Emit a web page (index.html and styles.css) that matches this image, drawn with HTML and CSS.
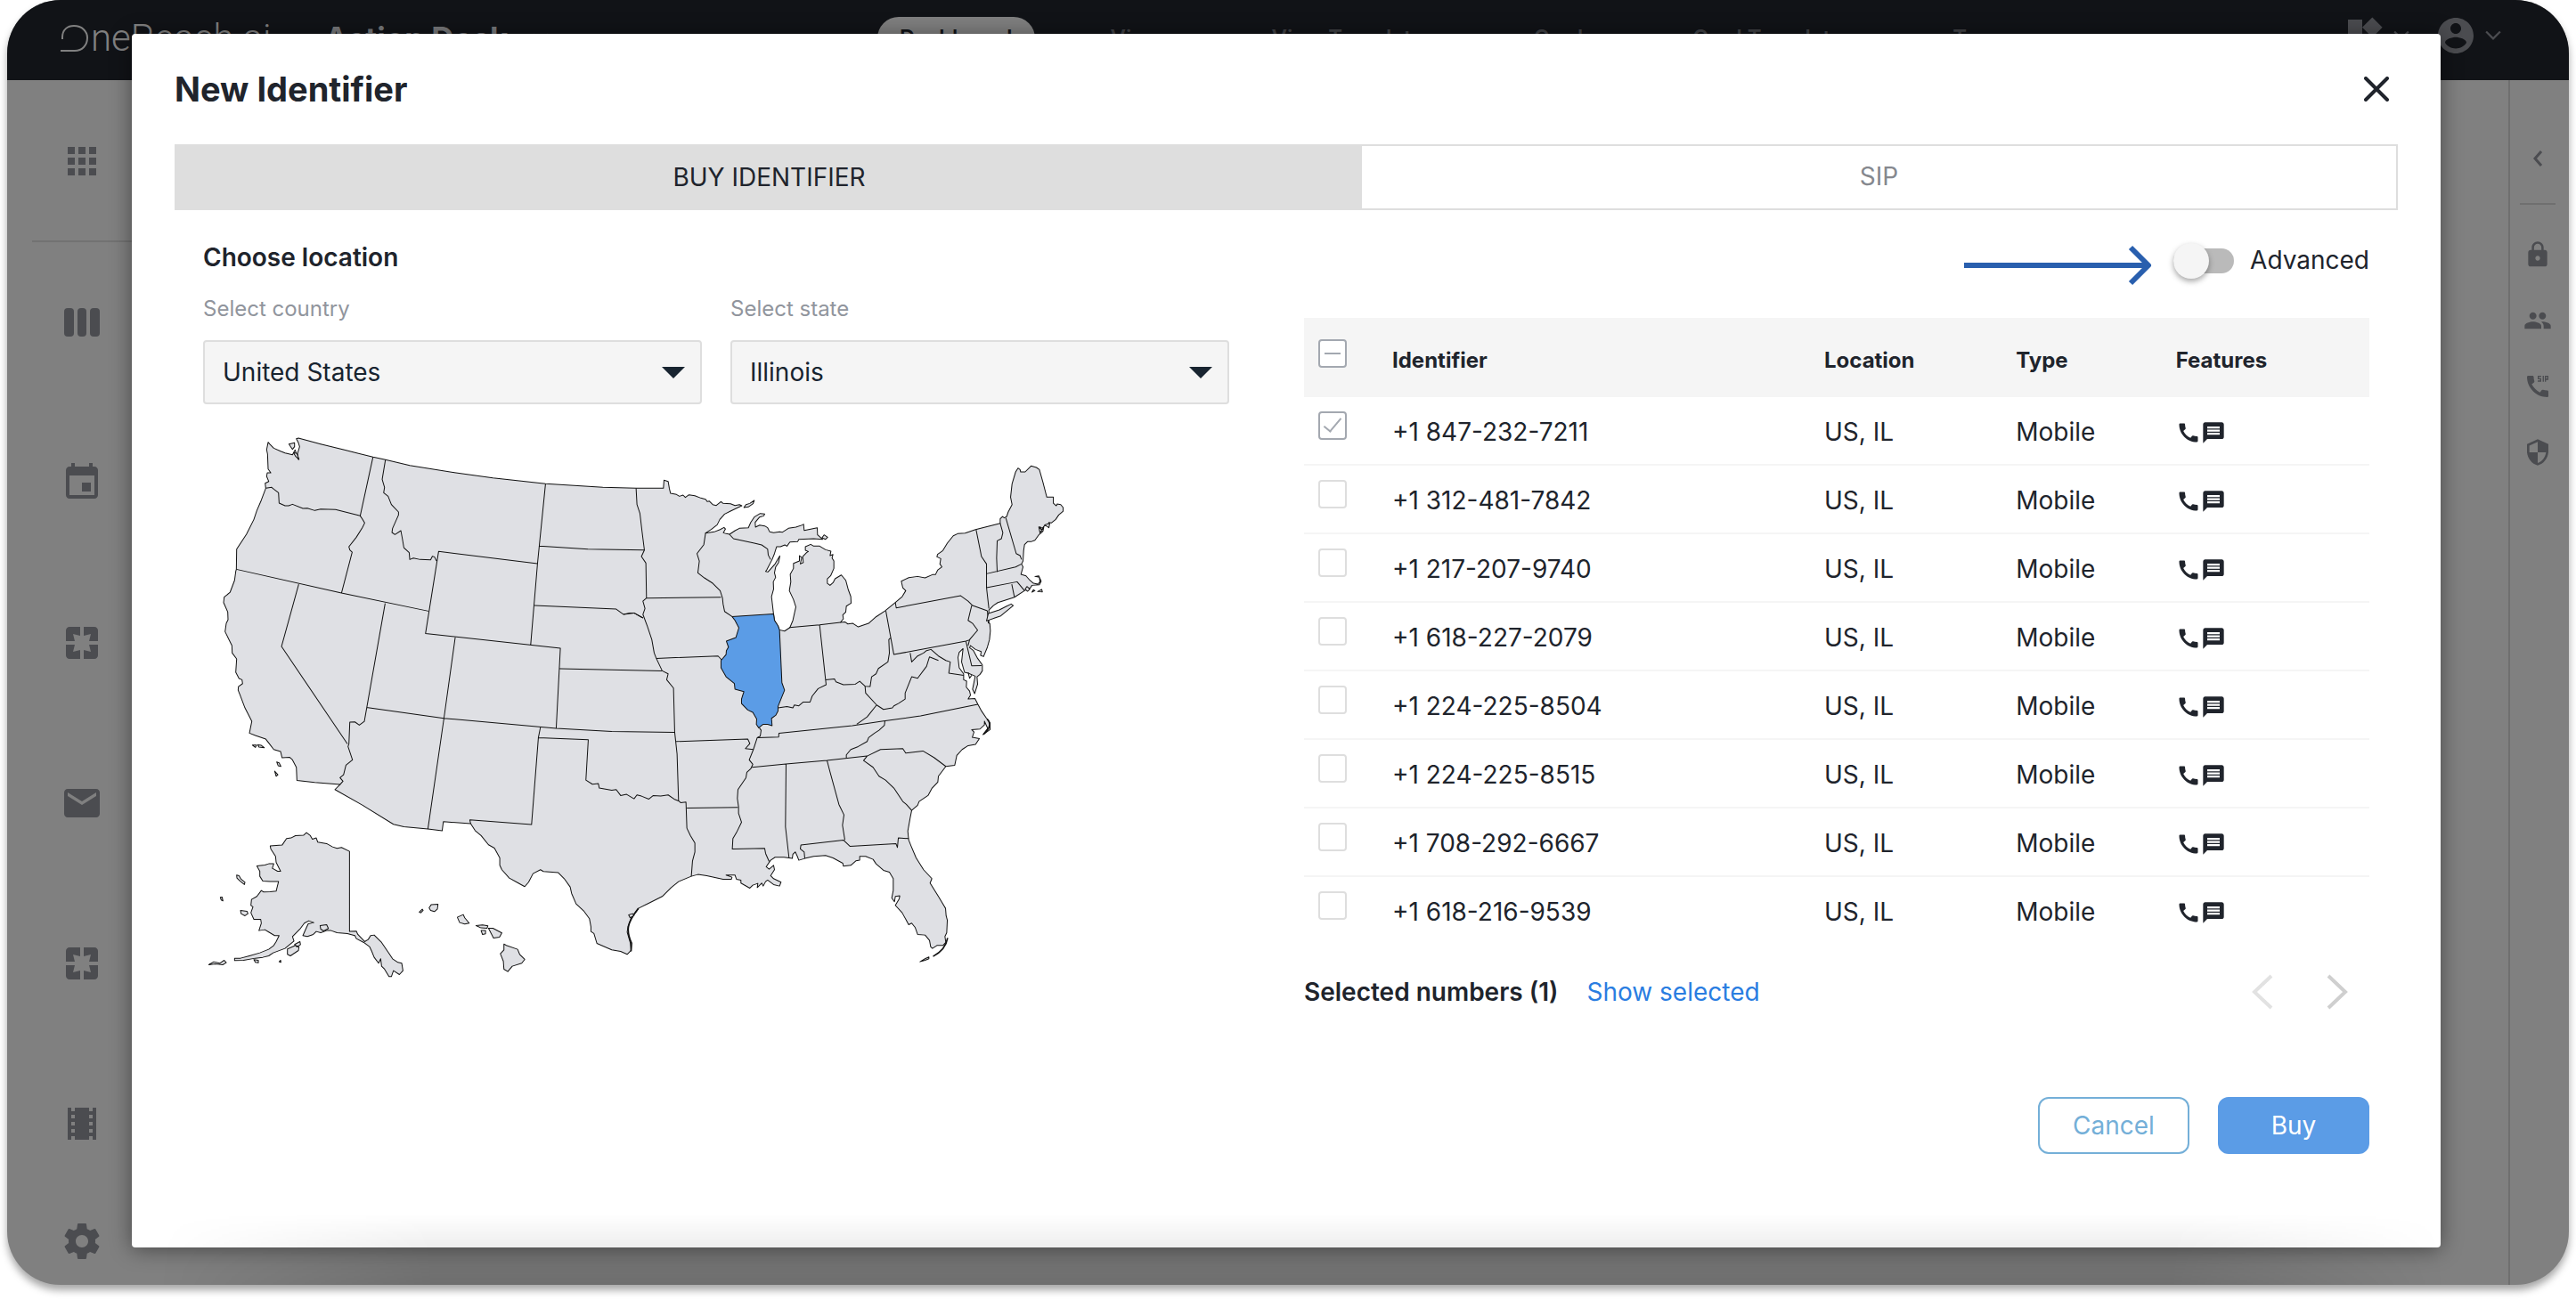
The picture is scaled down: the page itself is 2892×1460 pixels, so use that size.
FILE: index.html
```html
<!DOCTYPE html>
<html lang="en">
<head>
<meta charset="utf-8">
<meta name="viewport" content="width=device-width, initial-scale=1">
<title>New Identifier</title>
<link rel="stylesheet" href="styles.css">
</head>
<body>
<svg class="defs" aria-hidden="true">
  <symbol id="i-phone" viewBox="0 0 24 24"><path d="M20.01 15.38c-1.23 0-2.42-.2-3.53-.56a.977.977 0 0 0-1.01.24l-1.57 1.97c-2.83-1.35-5.48-3.9-6.89-6.83l1.95-1.66c.27-.28.35-.67.24-1.02-.37-1.11-.56-2.3-.56-3.53 0-.54-.45-.99-.99-.99H4.19C3.65 3 3 3.24 3 3.99 3 13.28 10.73 21 20.01 21c.71 0 .99-.63.99-1.18v-3.45c0-.54-.45-.99-.99-.99z"/></symbol>
  <symbol id="i-message" viewBox="0 0 24 24"><path d="M20 2H4c-1.1 0-1.99.9-1.99 2L2 22l4-4h14c1.1 0 2-.9 2-2V4c0-1.1-.9-2-2-2zm-2 12H6v-2h12v2zm0-3H6V9h12v2zm0-3H6V6h12v2z"/></symbol>
  <symbol id="i-pages" viewBox="0 0 24 24"><path d="M3 5v6h5L7 7l4 1V3H5c-1.100 0-2 .9-2 2zm5 8H3v6c0 1.100.9 2 2 2h6v-5l-4 1 1-4zm9 4l-4-1v5h6c1.100 0 2-.9 2-2v-6h-5l1 4zm2-14h-6v5l4-1-1 4h5V5c0-1.100-.9-2-2-2z"/></symbol>
  <symbol id="i-down" viewBox="0 0 16 10"><path d="M1 1l7 7 7-7" fill="none" stroke="currentColor" stroke-width="2"/></symbol>
</svg>

<div class="frame">
  <div class="app">
    <header class="topbar">
      <div class="brand">
        <span class="logo"><svg class="logo-mark" viewBox="0 0 32 32" aria-hidden="true"><path d="M2 17V15C2 6 8 2 15 2C24 2 30 8 30 15.500C30 24 24 30 16 30H0" fill="none" stroke="currentColor" stroke-width="2"/></svg>neReach.ai</span>
        <span class="product">Action Desk</span>
        <svg class="chev"><use href="#i-down"/></svg>
      </div>
      <nav class="nav">
        <a class="current" href="#">Dashboard</a>
        <a href="#">Views</a>
        <a href="#">View Templates</a>
        <a href="#">Cards</a>
        <a href="#">Card Templates</a>
        <a href="#">Tags</a>
      </nav>
      <div class="account">
        <svg class="icon" viewBox="0 0 24 24"><path d="M13 13v8h8v-8h-8zM3 21h8v-8H3v8zM3 3v8h8V3H3zm13.660-1.310L11 7.340 16.660 13l5.660-5.660-5.660-5.650z"/></svg>
        <svg class="chev"><use href="#i-down"/></svg>
        <svg class="icon user" viewBox="0 0 24 24"><path d="M12 2C6.480 2 2 6.480 2 12s4.480 10 10 10 10-4.480 10-10S17.520 2 12 2zm0 3c1.660 0 3 1.340 3 3s-1.340 3-3 3-3-1.340-3-3 1.340-3 3-3zm0 14.200c-2.500 0-4.710-1.280-6-3.220.03-1.990 4-3.080 6-3.080 1.990 0 5.970 1.090 6 3.080-1.290 1.940-3.500 3.220-6 3.220z"/></svg>
        <svg class="chev"><use href="#i-down"/></svg>
      </div>
    </header>
    <div class="workspace">
      <nav class="side" aria-label="Apps">
        <a href="#" aria-label="All apps"><svg class="icon" viewBox="0 0 24 24"><path d="M4 8h4V4H4v4zm6 12h4v-4h-4v4zm-6 0h4v-4H4v4zm0-6h4v-4H4v4zm6 0h4v-4h-4v4zm6-10v4h4V4h-4zm-6 4h4V4h-4v4zm6 6h4v-4h-4v4zm0 6h4v-4h-4v4z"/></svg></a>
        <a href="#" aria-label="Board"><svg class="icon" viewBox="0 0 48 48"><rect x="4" y="8" width="11" height="32" rx="4"/><rect x="19" y="8" width="10" height="32" rx="4"/><rect x="33" y="8" width="11" height="32" rx="4"/></svg></a>
        <a href="#" aria-label="Calendar"><svg class="icon" viewBox="0 0 24 24"><path d="M17 12h-5v5h5v-5zM16 1v2H8V1H6v2H5c-1.110 0-1.990.9-1.990 2L3 19c0 1.100.89 2 2 2h14c1.100 0 2-.9 2-2V5c0-1.100-.9-2-2-2h-1V1h-2zm3 18H5V8h14v11z"/></svg></a>
        <a href="#" aria-label="Pages"><svg class="icon"><use href="#i-pages"/></svg></a>
        <a href="#" aria-label="Mail"><svg class="icon" viewBox="0 0 24 24"><path d="M20 4H4c-1.100 0-1.990.9-1.990 2L2 18c0 1.100.9 2 2 2h16c1.100 0 2-.9 2-2V6c0-1.100-.9-2-2-2zm0 4l-8 5-8-5V6l8 5 8-5v2z"/></svg></a>
        <a href="#" aria-label="Extensions"><svg class="icon"><use href="#i-pages"/></svg></a>
        <a href="#" aria-label="Media"><svg class="icon" viewBox="0 0 24 24"><path d="M18 3v2h-2V3H8v2H6V3H4v18h2v-2h2v2h8v-2h2v2h2V3h-2zM8 17H6v-2h2v2zm0-4H6v-2h2v2zm0-4H6V7h2v2zm10 8h-2v-2h2v2zm0-4h-2v-2h2v2zm0-4h-2V7h2v2z"/></svg></a>
        <a href="#" aria-label="Settings"><svg class="icon" viewBox="0 0 24 24"><path d="M19.430 12.980c.04-.32.07-.64.07-.98s-.03-.66-.07-.98l2.110-1.650c.19-.15.24-.42.12-.64l-2-3.460c-.12-.22-.39-.3-.61-.22l-2.490 1c-.52-.4-1.080-.73-1.690-.98l-.38-2.650C14.460 2.180 14.250 2 14 2h-4c-.25 0-.46.18-.49.42l-.38 2.650c-.61.25-1.170.59-1.690.98l-2.490-1c-.23-.09-.49 0-.61.22l-2 3.460c-.13.22-.07.49.12.64l2.110 1.650c-.04.32-.07.65-.07.98s.03.66.07.98l-2.110 1.650c-.19.15-.24.42-.12.64l2 3.460c.12.22.39.3.61.22l2.490-1c.52.4 1.080.73 1.690.98l.38 2.650c.03.24.24.42.49.42h4c.25 0 .46-.18.49-.42l.38-2.650c.61-.25 1.170-.59 1.690-.98l2.490 1c.23.09.49 0 .61-.22l2-3.460c.12-.22.07-.49-.12-.64l-2.110-1.650zM12 15.500c-1.930 0-3.500-1.570-3.500-3.500s1.570-3.500 3.500-3.500 3.500 1.570 3.500 3.500-1.570 3.500-3.500 3.500z"/></svg></a>
      </nav>
      <nav class="rail" aria-label="Tools">
        <a class="collapse" href="#" aria-label="Expand"><svg viewBox="0 0 32 32"><path d="M20 8l-7 8 7 8" fill="none" stroke="currentColor" stroke-width="3"/></svg></a>
        <a href="#" aria-label="Security"><svg viewBox="0 0 24 24"><path d="M18 8h-1V6c0-2.760-2.240-5-5-5S7 3.240 7 6v2H6c-1.100 0-2 .9-2 2v10c0 1.100.9 2 2 2h12c1.100 0 2-.9 2-2V10c0-1.100-.9-2-2-2zm-6 9c-1.100 0-2-.9-2-2s.9-2 2-2 2 .9 2 2-.9 2-2 2zm3.100-9H8.900V6c0-1.710 1.390-3.100 3.100-3.100s3.100 1.390 3.100 3.100v2z"/></svg></a>
        <a href="#" aria-label="People"><svg viewBox="0 0 24 24"><path d="M16 11c1.660 0 2.990-1.340 2.990-3S17.660 5 16 5s-3 1.340-3 3 1.340 3 3 3zm-8 0c1.660 0 2.990-1.340 2.990-3S9.660 5 8 5 5 6.340 5 8s1.340 3 3 3zm0 2c-2.330 0-7 1.170-7 3.500V19h14v-2.500c0-2.330-4.670-3.500-7-3.500zm8 0c-.29 0-.62.02-.97.05 1.160.84 1.970 1.970 1.970 3.450V19h6v-2.500c0-2.330-4.670-3.500-7-3.500z"/></svg></a>
        <a href="#" aria-label="SIP phones"><svg viewBox="0 0 24 24"><use href="#i-phone" width="24" height="24"/><path d="M15 3.500h-2.500v2h2v2H12M16.700 3v5M18.500 8V3.500h2v2.500h-2" fill="none" stroke="currentColor"/></svg></a>
        <a href="#" aria-label="Shield"><svg viewBox="0 0 24 24"><path d="M12 1L3 5v6c0 5.550 3.840 10.740 9 12 5.160-1.260 9-6.450 9-12V5l-9-4zm0 10.990h7c-.53 4.120-3.280 7.790-7 8.940V12H5V6.300l7-3.110v8.800z"/></svg></a>
      </nav>
    </div>
  </div>

  <div class="overlay">
    <section class="modal" role="dialog" aria-labelledby="dlg-title">
      <header class="modal-head">
        <h1 id="dlg-title">New Identifier</h1>
        <button class="close" type="button" aria-label="Close"><svg viewBox="0 0 28 28"><path d="M2 2l24 24M26 2L2 26" fill="none" stroke="currentColor" stroke-width="4" stroke-linecap="round"/></svg></button>
      </header>
      <div class="tabs" role="tablist">
        <button class="tab active" type="button" role="tab" aria-selected="true">BUY IDENTIFIER</button>
        <button class="tab" type="button" role="tab" aria-selected="false">SIP</button>
      </div>

      <div class="content">
        <div class="location">
          <h2>Choose location</h2>
          <div class="fields">
            <div class="field">
              <label for="country">Select country</label>
              <select id="country"><option>United States</option></select>
            </div>
            <div class="field">
              <label for="state">Select state</label>
              <select id="state"><option>Illinois</option></select>
            </div>
          </div>
          <svg class="map" viewBox="0 0 3000 1950" role="img" aria-label="Map of the United States with Illinois selected">
            <!-- contiguous states -->
            <path class="land" d="M243 80L248 86 262 100 285 110 300 116 325 122 334 106 345 138 342 118 349 95 345 82 338 68 345 66 420 86 500 106 596 130 638 139 720 158 870 182 1000 200 1177 220 1370 232 1482 235 1574 235 1576 208 1590 212 1594 236 1598 252 1618 256 1628 262 1640 258 1648 266 1660 257 1680 260 1700 268 1716 272 1722 280 1728 278 1740 290 1752 293 1768 280 1775 286 1800 287 1815 293 1830 290 1838 294 1825 300 1800 312 1780 322 1764 340 1755 358 1735 374 1716 386 1745 382 1765 374 1778 367 1783 372 1776 385 1785 388 1797 390 1815 378 1830 370 1860 368 1868 350 1880 332 1900 320 1915 322 1912 328 1898 332 1883 350 1884 366 1898 359 1915 362 1925 368 1932 382 1945 385 1965 382 1975 383 1995 370 2020 366 2044 358 2046 356 2048 377 2092 368 2093 392 2110 407 2080 405 2030 407 2026 415 2000 416 1990 430 1983 426 1968 432 1955 432 1948 455 1940 475 1922 510 1918 515 1926 517 1950 490 1966 463 1962 485 1952 500 1948 520 1952 535 1944 550 1945 575 1938 600 1945 660 1948 680 1960 700 1964 712 1982 716 2000 704 2010 680 2020 635 2012 610 1998 580 2003 550 2001 525 2012 505 2012 488 2032 480 2032 462 2040 468 2035 490 2045 485 2043 465 2056 452 2062 448 2052 444 2052 432 2070 424 2080 430 2100 430 2120 442 2138 447 2135 462 2145 458 2142 470 2148 480 2148 505 2137 530 2126 540 2126 555 2135 562 2146 552 2152 540 2173 527 2188 545 2196 575 2205 600 2206 622 2190 632 2188 652 2178 662 2180 675 2170 687 2185 685 2195 692 2212 690 2230 702 2265 690 2290 668 2320 648 2355 620 2378 600 2390 580 2380 570 2375 548 2400 536 2430 532 2455 537 2480 526 2490 526 2498 510 2512 500 2505 490 2508 472 2495 466 2497 458 2515 445 2530 420 2550 395 2565 388 2590 386 2625 374 2708 353 2708 338 2716 330 2722 335 2730 330 2735 315 2748 290 2743 265 2748 220 2760 180 2768 167 2775 172 2777 180 2792 180 2812 160 2830 165 2840 172 2852 215 2865 265 2887 265 2887 285 2897 294 2900 288 2912 290 2920 300 2920 312 2905 325 2895 340 2880 352 2872 350 2868 362 2858 360 2850 370 2842 365 2850 382 2838 392 2825 410 2812 415 2800 415 2790 425 2787 445 2785 480 2780 490 2785 500 2778 525 2795 530 2808 545 2820 555 2835 558 2842 550 2840 535 2825 532 2838 530 2846 548 2840 560 2815 562 2810 570 2790 580 2756 602 2700 620 2685 630 2670 645 2670 690 2673 690 2675 715 2672 745 2665 770 2652 802 2642 798 2644 785 2625 778 2608 765 2605 772 2618 782 2632 808 2648 830 2648 850 2640 862 2630 870 2632 895 2622 927 2615 912 2624 868 2600 858 2588 855 2578 820 2583 775 2570 788 2566 805 2570 840 2585 860 2585 880 2595 885 2594 905 2605 918 2608 932 2600 945 2623 943 2633 963 2645 985 2662 1010 2674 1025 2674 1048 2650 1065 2666 1044 2655 1020 2655 1032 2640 1046 2612 1048 2620 1056 2614 1074 2638 1078 2625 1098 2600 1102 2580 1115 2562 1135 2555 1168 2525 1172 2500 1205 2498 1225 2478 1246 2465 1270 2435 1290 2430 1303 2410 1320 2405 1345 2397 1390 2400 1420 2408 1440 2425 1480 2450 1520 2478 1550 2472 1565 2500 1610 2524 1650 2526 1675 2530 1690 2528 1732 2522 1745 2525 1765 2515 1775 2495 1775 2480 1785 2474 1780 2470 1758 2455 1740 2430 1738 2422 1715 2410 1700 2400 1705 2378 1665 2355 1640 2368 1618 2370 1608 2355 1610 2352 1628 2343 1615 2348 1590 2348 1550 2335 1528 2315 1522 2290 1500 2280 1485 2255 1475 2235 1475 2235 1488 2222 1490 2205 1505 2180 1508 2178 1498 2145 1480 2120 1472 2080 1475 2050 1482 2030 1488 2025 1475 2018 1460 2010 1468 2008 1482 1980 1478 1950 1478 1935 1488 1920 1510 1930 1518 1945 1505 1948 1520 1935 1540 1945 1550 1970 1562 1965 1575 1945 1570 1925 1555 1918 1560 1910 1575 1905 1565 1890 1580 1892 1566 1875 1572 1865 1582 1835 1565 1835 1555 1820 1552 1815 1538 1785 1538 1805 1545 1803 1552 1775 1552 1720 1540 1690 1536 1668 1542 1625 1560 1600 1580 1570 1610 1530 1630 1490 1650 1465 1685 1455 1710 1452 1730 1462 1765 1465 1792 1452 1805 1430 1795 1400 1790 1350 1768 1340 1735 1330 1728 1330 1712 1325 1685 1305 1658 1280 1635 1265 1600 1260 1578 1240 1550 1220 1530 1170 1526 1160 1520 1135 1533 1120 1562 1107 1577 1080 1562 1055 1548 1030 1520 1023 1505 1023 1480 1005 1447 985 1436 960 1405 940 1388 925 1365 833 1358 829 1389 781 1383 700 1375 665 1367 560 1302 468 1250 485 1233 400 1226 340 1219 338 1175 325 1150 315 1141 290 1143 285 1122 262 1115 245 1093 235 1080 200 1068 180 1060 188 1020 165 975 148 930 142 915 143 903 157 893 155 880 145 876 134 855 137 810 122 790 121 765 98 718 102 690 108 678 107 652 93 620 95 602 115 585 130 545 134 515 136 508 137 440 170 390 195 340 205 310 220 275 235 235 233 218 245 212 238 195 240 183 252 183 243 170 241 120 238 105Z"/>
            <g class="line">
              <path d="M235 235L255 232 262 238 278 250 280 285 300 294 312 294 325 289 360 303 375 302 400 310 420 305 470 307 553 328M596 130L553 328 560 338 568 352 560 368 540 400 515 432 518 443 526 450 490 588M136 508L490 588 783 649M346 558L288 768 510 1096M637 623L567 1020 550 1033 535 1022 518 1023 515 1096 512 1105 527 1150 505 1168 497 1200 485 1210 495 1222 485 1233M574 973L835 1010 1213 1044 1400 1054 1612 1057M873 737L835 1010 781 1383"/>
              <path d="M638 139L627 205 635 232 632 250 647 262 658 290 682 315 682 325 662 370 660 384 670 391 690 378 695 405 700 435 718 452 720 475 732 470 755 475 790 476 796 464 803 466 810 480M1150 489L817 448 773 724 1227 774 1213 1044M1177 220L1150 489 1127 763M1157 430L1320 440 1510 443M1140 630L1415 642 1440 660 1475 655 1505 672M1225 843L1570 850M1160 1040L1153 1075 1130 1368 922 1352 925 1365M1153 1075L1321 1082 1313 1218 1335 1232 1355 1230 1358 1245 1400 1252 1415 1250 1430 1270 1450 1266 1475 1281 1485 1268 1500 1272 1525 1282 1540 1270 1565 1272 1590 1268 1610 1282 1625 1288 1632 1294 1650 1292 1653 1380 1665 1405 1680 1430 1680 1460 1672 1490 1668 1542"/>
              <path d="M1570 850L1590 860 1585 880 1608 908 1612 1057 1620 1130 1625 1288M1653 1312L1825 1310M1617 1088L1858 1080 1865 1095 1850 1112 1877 1115"/>
            </g>
            <g class="line" transform="translate(1440 0)">
              <path d="M42 235L45 290 55 320 62 380 70 443 60 465 75 487 77 605 328 602M77 605L65 615 72 640 65 660 80 700 95 745 103 790 110 808 130 850M35 655L65 672M0 660L20 655 35 655M110 808L318 800 332 815M276 386L270 425 247 455 255 480 250 520 272 537 300 555 325 580 333 605 335 625 340 650 365 667M356 390L370 405 440 420 465 426 485 440 487 460 495 475"/>
              <path d="M558 704L660 695 730 687M660 695L680 880M520 975L550 970 570 975 575 965 590 968 605 955 628 955 635 935 655 910 682 897 680 880 710 877 715 887 740 897 780 895 795 885 813 902 830 903 835 870 850 860 858 842 890 820 895 790 893 745 898 740M883 648L910 795 1153 750 1167 745M915 620L918 638 1135 597 1160 615 1175 630 1225 648M1172 630L1160 680 1175 690 1192 713 1165 745 1160 765M1153 752L1172 833 1205 832"/>
              <path d="M965 790L970 820 990 800 1010 790 1020 782 1035 778 1060 800 1085 815 1100 820 1095 858 1145 865M1060 815L1030 803 1020 835 990 875 970 870 948 925 948 945 925 960 910 968 905 975 875 980 852 965 815 925 813 902M852 965L820 1005 785 1030M1187 375L1200 440 1205 465 1222 490 1222 570 1230 640M1268 353L1277 385 1272 405 1258 412 1256 470 1258 517M1222 523L1320 500 1340 490M1287 335L1322 455 1335 462 1340 475M1222 570L1325 550 1350 580M1307 558L1316 602M1225 648L1228 690M1160 855L1165 875 1172 865"/>
            </g>
            <g class="line" transform="translate(1440 930)">
              <path d="M450 145L522 143 523 130 770 105 870 90 1000 72 1193 33M880 88L878 104 860 120 845 130 825 145 820 158 790 175 765 185 750 203 750 213M432 245L547 234 685 222 820 207 865 185 940 182 950 197 1008 190 1045 212 1085 242M820 207L808 222 840 245 860 275 882 288 910 315 940 360 952 370 970 390M547 234L545 445 557 550M685 222L695 260 725 370 742 405 737 440 745 490M610 552L608 530 595 520 597 507 740 490 762 511 917 502 922 515 925 483 960 485"/>
              <path d="M457 112L463 120 460 140 450 145 437 185 423 220 435 235 428 250 415 262 412 280 385 320 383 350 387 378 387 400 397 430 380 465 368 485 366 520 475 518 478 535 490 562"/>
            </g>
            <g class="land" transform="translate(1440 0)">
              <path class="selected" d="M365 667L505 658 508 680 520 698 525 712 533 890 542 915 532 940 520 970 520 985 512 1000 498 1010 500 1035 485 1030 470 1030 455 1042 447 1030 448 1012 435 990 418 982 397 960 397 945 405 920 375 912 373 893 345 870 328 840 328 815 345 795 346 782 353 770 346 750 378 738 388 705 375 680Z"/>
              <path d="M1228 657L1265 645 1290 632 1305 625 1312 630 1270 665 1250 672 1222 682Z"/>
              <path d="M405 300L412 290 425 286 440 276 436 287 420 298ZM668 402L675 392 687 400 680 407ZM1398 365L1412 380 1415 365 1402 385ZM1418 358L1435 353 1432 368ZM1352 575L1358 566 1368 575 1360 582ZM1375 585L1385 580 1380 577ZM1394 583L1408 576 1410 584Z"/>
            </g>
            <!-- barrier islands and keys -->
            <path class="bold" d="M2664 1012C2676 1025 2678 1040 2652 1064M2531 1750C2526 1780 2505 1800 2482 1812M1490 1650C1450 1700 1448 1725 1467 1768L1465 1795"/>
            <g class="land">
              <path d="M2438 1830L2455 1820 2468 1814 2468 1820 2455 1825ZM313 86L332 82 332 95 325 104ZM328 115L340 118 347 138 336 128ZM190 1100L204 1100 200 1108ZM208 1099L220 1101 230 1109 212 1107ZM272 1157L280 1160 286 1172 277 1170ZM265 1188L276 1200 270 1205ZM1457 1672L1470 1668 1475 1674 1462 1682Z"/>
            </g>
            <!-- Alaska and Hawaii -->
            <g class="land" transform="translate(0 930)">
              <path d="M372 465L362 474 335 475 320 483 305 485 290 507 250 510 252 520 268 545 270 565 285 595 275 595 257 585 262 570 245 570 232 574 205 577 215 595 215 612 225 628 250 630 278 630 270 662 250 664 228 665 220 660 205 680 187 690 185 710 192 715 185 735 195 757 218 757 220 770 212 795 232 792 245 800 265 812 280 812 270 832 262 845 245 858 215 870 180 880 150 888 130 888 130 896 160 895 200 888 225 885 245 880 260 870 300 855 330 830 325 815 350 790 365 770 380 762 397 768 378 772 372 785 360 812 375 815 395 808 405 798 420 802 440 795 455 795 475 802 510 805 535 812 540 822 565 835 585 850 592 865 600 885 615 905 622 890 625 915 635 925 650 950 658 950 665 930 685 943 697 930 693 905 680 902 662 890 650 872 625 835 600 810 588 812 580 825 568 832 545 808 540 797 517 798 517 528 490 515 475 518 460 513 440 502 410 497 405 483 392 487 385 475Z"/>
              <path d="M418 778L440 775 446 788 430 796 420 790ZM308 857L335 845 347 850 345 862 318 880 308 875ZM332 842L350 832 352 842 340 850ZM137 608L145 610 152 622 165 632 163 640 148 628 138 618ZM82 683L88 682 91 695 85 692ZM150 727L172 730 175 738 165 745 152 738ZM43 910L60 900 80 905 95 895 102 903 90 910 65 907ZM195 893L210 895 210 903 200 902ZM280 900L285 895 286 902Z"/>
              <path d="M785 718L792 708 815 706 813 722 803 731 790 727ZM752 733L762 723 765 727 757 735ZM880 750L900 741 905 752 920 770 905 773 888 768ZM943 778L965 776 983 779 980 787 960 786ZM985 787L1000 787 1030 803 1022 817 1002 820ZM960 795L975 795 975 806 965 808ZM1037 840L1045 845 1083 858 1090 875 1107 892 1097 905 1065 915 1050 933 1037 925 1035 898 1025 873 1037 860Z"/>
            </g>
          </svg>
        </div>

        <div class="numbers">
          <div class="advanced">
            <svg class="pointer" viewBox="0 0 212 44" aria-hidden="true"><path d="M0 27H208M187 7l20 20-20 20" fill="none" stroke="currentColor" stroke-width="6" stroke-linejoin="round"/></svg>
            <input class="toggle" id="adv" type="checkbox">
            <label for="adv">Advanced</label>
          </div>
          <table>
            <thead>
              <tr>
                <th class="pick"><input type="checkbox" class="box mixed" aria-label="Select all"></th>
                <th class="ident">Identifier</th>
                <th class="loc">Location</th>
                <th class="type">Type</th>
                <th>Features</th>
              </tr>
            </thead>
            <tbody>
              <tr><td class="pick"><input type="checkbox" class="box" checked aria-label="+1 847-232-7211"></td><td>+1 847-232-7211</td><td>US, IL</td><td>Mobile</td><td><span class="features"><svg><use href="#i-phone"/></svg><svg><use href="#i-message"/></svg></span></td></tr>
              <tr><td class="pick"><input type="checkbox" class="box" aria-label="+1 312-481-7842"></td><td>+1 312-481-7842</td><td>US, IL</td><td>Mobile</td><td><span class="features"><svg><use href="#i-phone"/></svg><svg><use href="#i-message"/></svg></span></td></tr>
              <tr><td class="pick"><input type="checkbox" class="box" aria-label="+1 217-207-9740"></td><td>+1 217-207-9740</td><td>US, IL</td><td>Mobile</td><td><span class="features"><svg><use href="#i-phone"/></svg><svg><use href="#i-message"/></svg></span></td></tr>
              <tr><td class="pick"><input type="checkbox" class="box" aria-label="+1 618-227-2079"></td><td>+1 618-227-2079</td><td>US, IL</td><td>Mobile</td><td><span class="features"><svg><use href="#i-phone"/></svg><svg><use href="#i-message"/></svg></span></td></tr>
              <tr><td class="pick"><input type="checkbox" class="box" aria-label="+1 224-225-8504"></td><td>+1 224-225-8504</td><td>US, IL</td><td>Mobile</td><td><span class="features"><svg><use href="#i-phone"/></svg><svg><use href="#i-message"/></svg></span></td></tr>
              <tr><td class="pick"><input type="checkbox" class="box" aria-label="+1 224-225-8515"></td><td>+1 224-225-8515</td><td>US, IL</td><td>Mobile</td><td><span class="features"><svg><use href="#i-phone"/></svg><svg><use href="#i-message"/></svg></span></td></tr>
              <tr><td class="pick"><input type="checkbox" class="box" aria-label="+1 708-292-6667"></td><td>+1 708-292-6667</td><td>US, IL</td><td>Mobile</td><td><span class="features"><svg><use href="#i-phone"/></svg><svg><use href="#i-message"/></svg></span></td></tr>
              <tr><td class="pick"><input type="checkbox" class="box" aria-label="+1 618-216-9539"></td><td>+1 618-216-9539</td><td>US, IL</td><td>Mobile</td><td><span class="features"><svg><use href="#i-phone"/></svg><svg><use href="#i-message"/></svg></span></td></tr>
            </tbody>
          </table>
          <div class="summary">
            <strong>Selected numbers (1)</strong>
            <a href="#">Show selected</a>
            <div class="pager">
              <button class="prev" type="button" aria-label="Previous page" disabled><svg viewBox="0 0 24 40"><path d="M22 2L3 20l19 18" fill="none" stroke="currentColor" stroke-width="4"/></svg></button>
              <button class="next" type="button" aria-label="Next page"><svg viewBox="0 0 24 40"><path d="M2 2l19 18L2 38" fill="none" stroke="currentColor" stroke-width="4"/></svg></button>
            </div>
          </div>
        </div>
      </div>

      <footer class="actions">
        <button class="btn" type="button">Cancel</button>
        <button class="btn primary" type="button">Buy</button>
      </footer>
    </section>
  </div>
</div>
</body>
</html>
```
FILE: styles.css
```css
* { box-sizing: border-box; }

body {
  margin: 0;
  padding: 0 8px 17px;
  background: #fff;
  color: #20242c;
  font-family: Inter, "Liberation Sans", sans-serif;
  font-size: 28px;
  line-height: 36px;
}

svg { display: block; fill: currentColor; }
.defs { position: absolute; width: 0; height: 0; }
a { color: inherit; text-decoration: none; }
button { font: inherit; color: inherit; padding: 0; border: 0; background: none; }
h1, h2 { margin: 0; font-weight: 600; }

/* page behind the dialog */
.frame {
  display: grid;
  min-height: calc(100vh - 17px);
  border-radius: 60px;
  overflow: hidden;
  background: #808080;
  box-shadow: 0 6px 8px rgba(0, 0, 0, .35);
}
.app, .overlay, .frame::after { grid-area: 1 / 1; min-width: 0; }
.app { display: flex; flex-direction: column; color: #4b4c50; }

/* shade that rises from the lower edge, over the dialog too */
.frame::after {
  content: "";
  z-index: 1;
  align-self: end;
  height: 80px;
  margin: 0 140px 0 172px;
  background: linear-gradient(to top, rgba(0, 0, 0, .14), transparent);
  mask-image: linear-gradient(to right, transparent, #000 12%, #000 88%, transparent);
  pointer-events: none;
}

.topbar {
  display: flex;
  justify-content: space-between;
  height: 90px;
  padding: 0 76px 0 60px;
  background: #111317;
}
.brand, .nav, .account { display: flex; align-items: center; height: 86px; }
.brand { width: 917px; color: #77787a; }
.logo { display: flex; align-items: center; font-family: Roboto, sans-serif; font-weight: 300; font-size: 42px; color: #808080; }
.logo-mark { width: 32px; height: 32px; margin-right: 2px; }
.product { margin-left: 60px; font-size: 35px; font-weight: 700; }
.chev { width: 18px; height: 12px; }
.brand .chev { margin-left: 28px; }
.nav { flex: 1; gap: 60px; font-size: 24px; font-weight: 600; color: #404145; }
.nav a { padding: 6px 25px; line-height: 36px; border-radius: 24px; white-space: nowrap; }
.nav .current { background: #808080; color: #111317; }
.icon { width: 48px; height: 48px; }
.account { height: 80px; }
.account .chev { margin: 0 0 0 9px; }
.account .user { margin-left: 28px; }

.workspace { flex: 1; display: flex; justify-content: space-between; }
.side { width: 168px; display: flex; flex-direction: column; }
.side a { display: grid; place-items: center; height: 180px; }
.side a:first-child { height: 182px; margin: 0 28px; padding-top: 2px; border-bottom: 2px solid #727272; }
.side a:last-child { height: 84px; }
.rail {
  width: 68px;
  display: flex;
  flex-direction: column;
  align-items: center;
  gap: 42px;
  padding-right: 4px;
  border-left: 2px solid #6f6f6f;
}
.rail svg { width: 32px; height: 32px; }
.rail .collapse { width: 40px; height: 140px; margin-bottom: -2px; padding: 72px 4px 0; border-bottom: 2px solid #6f6f6f; }

/* dialog */
.overlay { display: flex; padding: 38px 144px 42px 140px; }
.modal {
  flex: 1;
  min-width: 0;
  padding: 38px 48px 105px;
  border-radius: 4px;
  background: #fff;
  box-shadow: 0 2px 24px rgba(0, 0, 0, .45);
  position: relative;
}
.modal-head { display: flex; justify-content: space-between; align-items: center; padding-right: 10px; }
.modal-head h1 { font-size: 38px; line-height: 48px; font-weight: 700; }
.close svg { width: 28px; height: 28px; }

.tabs { display: flex; margin-top: 38px; height: 74px; border: 2px solid #dedede; }
.tab { flex: 581; padding-bottom: 2px; color: #85888e; }
.tab.active { flex: 666; padding: 0; background: #dedede; color: #20242c; }

.content { display: grid; grid-template-columns: 1152fr 1196fr; gap: 84px; padding: 35px 32px 0; }
h2 { font-size: 28px; line-height: 36px; }
.fields { display: grid; grid-template-columns: 1fr 1fr; gap: 32px; margin-top: 26px; }
.field { position: relative; }
.field label { display: block; margin-bottom: 21px; font-size: 24px; line-height: 28px; color: #91959d; }
.field::after {
  content: "";
  position: absolute;
  right: 19px;
  bottom: 29px;
  border: 13px solid transparent;
  border-top-color: #182430;
  border-bottom: 0;
  pointer-events: none;
}
select {
  display: block;
  width: 100%;
  height: 72px;
  padding: 0 20px;
  font: inherit;
  color: #182430;
  border: 2px solid #dedede;
  border-radius: 4px;
  appearance: none;
  background: #f5f5f5;
}
.map { width: 87%; margin: 16px 0 0 -8px; padding-right: 2px; overflow: visible; }
.land { fill: #dfe0e4; }
.land, .line { stroke: #111; stroke-width: 3; stroke-linejoin: round; }
.line { fill: none; }
.bold { fill: none; stroke: #111; stroke-width: 5; }
.selected { fill: #5b9ce6; }

.advanced { display: flex; justify-content: flex-end; align-items: center; height: 44px; margin-bottom: 42px; }
.pointer { width: 212px; height: 44px; margin-right: 23px; color: #295fae; overflow: visible; }
.toggle { position: relative; appearance: none; width: 68px; height: 28px; margin: 0 18px 0 0; border-radius: 14px; background: #bababa; }
.toggle::before {
  content: "";
  position: absolute;
  left: 0;
  top: -6px;
  width: 40px;
  height: 40px;
  border-radius: 50%;
  background: #f5f5f5;
  box-shadow: 0 3px 6px rgba(0, 0, 0, .35);
}
.advanced label { padding-bottom: 2px; }

table { width: 100%; table-layout: fixed; border-collapse: separate; border-spacing: 0; }
th, td { padding: 0; text-align: left; }
th { height: 89px; padding-top: 7px; background: #f5f5f5; font-size: 24px; font-weight: 700; }
td { height: 77px; padding-top: 2px; border-bottom: 2px solid #f5f5f5; }
tr:last-child td { border-bottom-color: transparent; }
td.pick { padding: 16px 0 0 16px; vertical-align: top; }
th.pick { width: 99px; padding: 24px 0 0 16px; vertical-align: top; }
.ident { width: 485px; }
.loc { width: 18%; }
.type { width: 15%; }
.box { display: grid; place-items: center; appearance: none; width: 32px; height: 32px; margin: 0; border: 2px solid #dedede; border-radius: 4px; background: #fff; }
.box:checked, .mixed { border-color: #a3a8b0; }
.mixed::before { content: ""; width: 18px; height: 2px; background: #a3a8b0; }
.box:checked::before { content: ""; width: 8px; height: 18px; margin-bottom: 6px; border: solid #a3a8b0; border-width: 0 2px 2px 0; transform: rotate(40deg); }
.features { display: flex; padding-top: 3px; }
.features svg { width: 28px; height: 28px; }

.summary { display: flex; align-items: center; height: 40px; margin-top: 32px; }
.summary strong { font-weight: 600; }
.summary a { margin-left: 32px; color: #2a7de1; }
.pager { display: flex; gap: 60px; margin-left: auto; padding-right: 24px; }
.pager svg { width: 24px; height: 40px; }
.prev { color: #e2e2e2; }
.next { color: #cfcfcf; }

.actions { display: flex; justify-content: flex-end; gap: 32px; margin-top: 98px; padding-right: 32px; }
.btn { width: 170px; height: 64px; border: 2px solid #74afd8; border-radius: 12px; color: #74afd8; }
.btn.primary { background: #5b9ce6; border-color: #5b9ce6; color: #fff; }
```
